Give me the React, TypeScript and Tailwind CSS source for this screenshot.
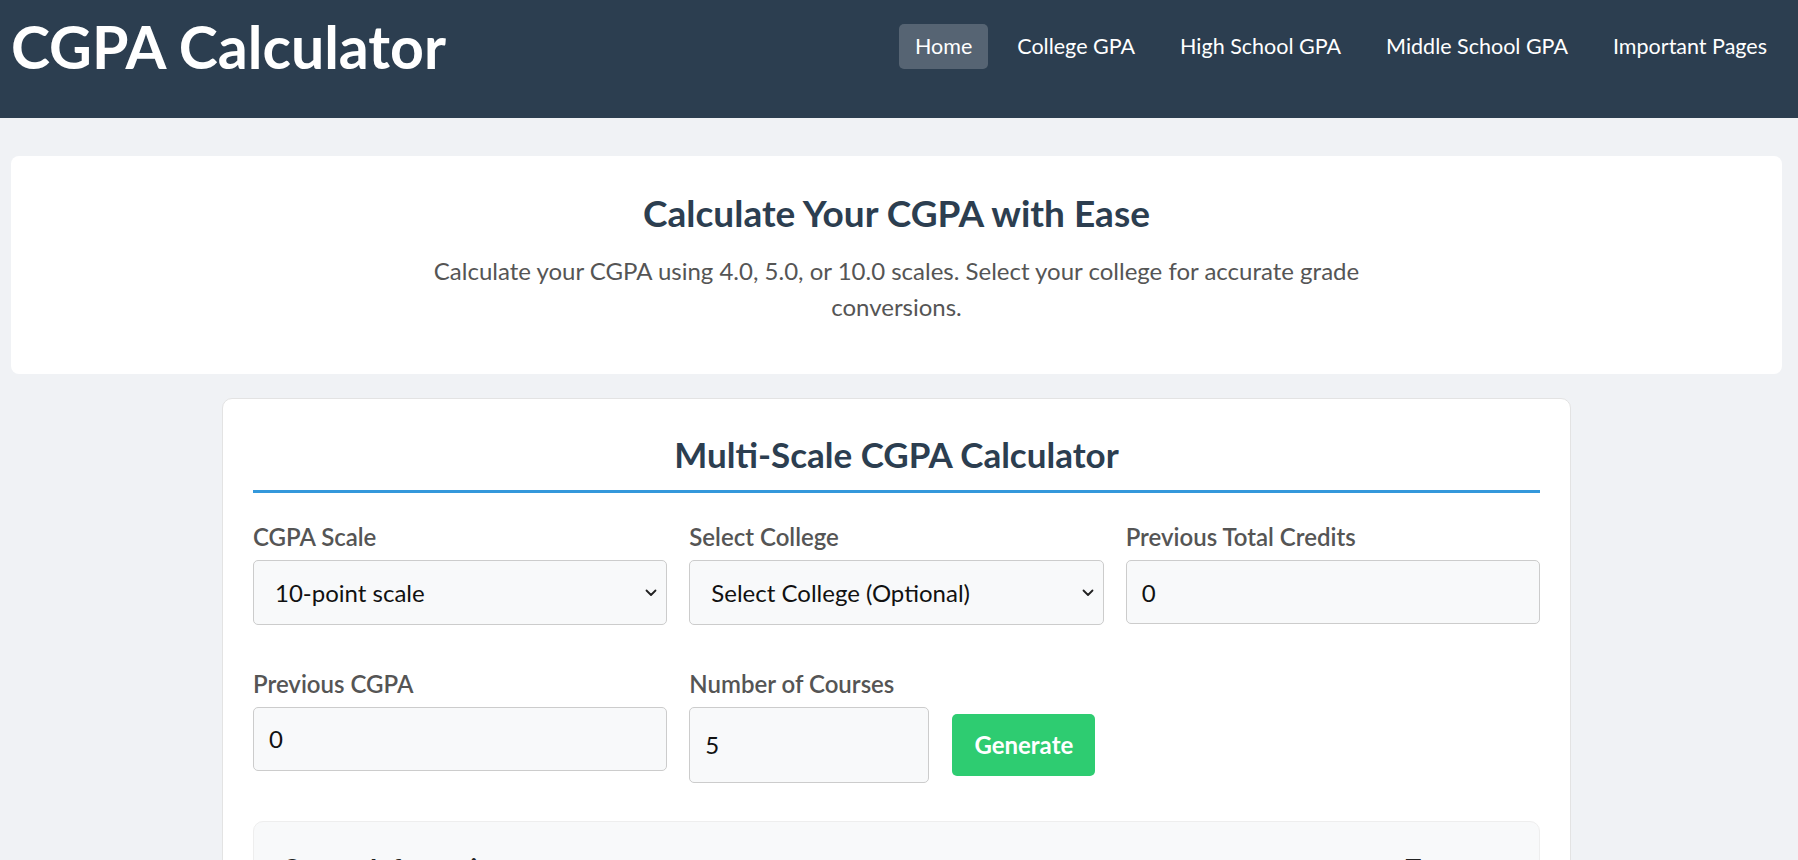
const navLinks = ["Home", "College GPA", "High School GPA", "Middle School GPA", "Important Pages"]

function Chevron() {
  return (
    <svg
      className="pointer-events-none absolute right-[10px] top-1/2 -translate-y-1/2"
      width="12"
      height="8"
      viewBox="0 0 12 8"
      fill="none"
    >
      <path d="M1.5 1.5 L6 6 L10.5 1.5" stroke="#222" strokeWidth="1.8" strokeLinecap="round" strokeLinejoin="round" />
    </svg>
  )
}

function Label({ children }: { children: React.ReactNode }) {
  return <label className="mb-[8px] block text-[24px] font-semibold leading-[1.2] text-[#555]">{children}</label>
}

function SelectBox({ value, options }: { value: string; options: string[] }) {
  return (
    <div className="relative">
      <select
        defaultValue={value}
        className="h-[65px] w-full appearance-none rounded-[5px] border border-[#ccc] bg-[#f8f9fa] pl-[21px] pr-8 text-[24px] text-[#111] outline-none"
      >
        {options.map((o) => (
          <option key={o}>{o}</option>
        ))}
      </select>
      <Chevron />
    </div>
  )
}

function TextInput({ value, tall }: { value: string; tall?: boolean }) {
  return (
    <input
      type="number"
      defaultValue={value}
      className={
        tall
          ? "h-[76px] w-[240px] rounded-[5px] border border-[#ccc] bg-[#f8f9fa] px-[15px] text-[24px] text-[#111] outline-none"
          : "h-[64px] w-full rounded-[5px] border border-[#ccc] bg-[#f8f9fa] px-[15px] text-[24px] text-[#111] outline-none"
      }
    />
  )
}

export default function App() {
  return (
    <div className="min-h-screen bg-[#f0f2f5] font-['Lato','Open_Sans',sans-serif]">
      {/* Header */}
      <header className="flex h-[118px] items-start justify-between bg-[#2c3e50] pl-[11px] pr-[15px] pt-[11px]">
        <h1 className="text-[59px] font-bold leading-[72px] text-white">CGPA Calculator</h1>
        <nav className="mt-[13px] flex gap-[13px]">
          {navLinks.map((link, i) => (
            <a
              key={link}
              href="#"
              className={
                i === 0
                  ? "flex h-[45px] items-center rounded-[5px] bg-white/20 px-4 text-[21.5px] text-white"
                  : "flex h-[45px] items-center rounded-[5px] px-4 text-[21.5px] text-white"
              }
            >
              {link}
            </a>
          ))}
        </nav>
      </header>

      <main className="pt-[38px]">
        {/* Hero */}
        <section className="ml-[11px] mr-[16px] rounded-[8px] bg-white pb-[49px] pt-[35px] text-center">
          <h2 className="text-[37px] font-bold leading-[1.2] text-[#2c3e50]">Calculate Your CGPA with Ease</h2>
          <p className="mx-auto mt-[18px] max-w-[960px] text-[24px] leading-[36px] text-[#555]">
            Calculate your CGPA using 4.0, 5.0, or 10.0 scales. Select your college for accurate grade conversions.
          </p>
        </section>

        {/* Calculator */}
        <section className="ml-[222px] mt-[24px] w-[1349px] rounded-[10px] border border-[#e3e3e3] bg-white px-[30px] pt-[34px]">
          <h2 className="border-b-[3px] border-[#3498db] pb-[15px] text-center text-[35px] font-bold leading-[1.2] text-[#2c3e50]">
            Multi-Scale CGPA Calculator
          </h2>

          <div className="mt-[30px] grid grid-cols-3 gap-x-[22px] gap-y-[45px]">
            <div>
              <Label>CGPA Scale</Label>
              <SelectBox value="10-point scale" options={["4-point scale", "5-point scale", "10-point scale"]} />
            </div>
            <div>
              <Label>Select College</Label>
              <SelectBox value="Select College (Optional)" options={["Select College (Optional)"]} />
            </div>
            <div>
              <Label>Previous Total Credits</Label>
              <TextInput value="0" />
            </div>
            <div>
              <Label>Previous CGPA</Label>
              <TextInput value="0" />
            </div>
            <div>
              <Label>Number of Courses</Label>
              <div className="flex items-center gap-[23px]">
                <TextInput value="5" tall />
                <button className="h-[62px] w-[143px] rounded-[5px] bg-[#2ecc71] text-[24px] font-bold text-white">
                  Generate
                </button>
              </div>
            </div>
          </div>

          <div className="mt-[38px] rounded-[10px] border border-[#eee] bg-[#f8f9fa] px-[28px] pb-8 pt-[31px]">
            <div className="flex items-center justify-between">
              <h3 className="text-[26px] font-bold leading-[1.2] text-[#222]">Course Information</h3>
              <span className="mr-[90px] text-[26px] font-bold leading-[1.2] text-[#222]">T</span>
            </div>
            <div className="h-[120px]" />
          </div>
          <div className="h-[30px]" />
        </section>
      </main>
    </div>
  )
}
